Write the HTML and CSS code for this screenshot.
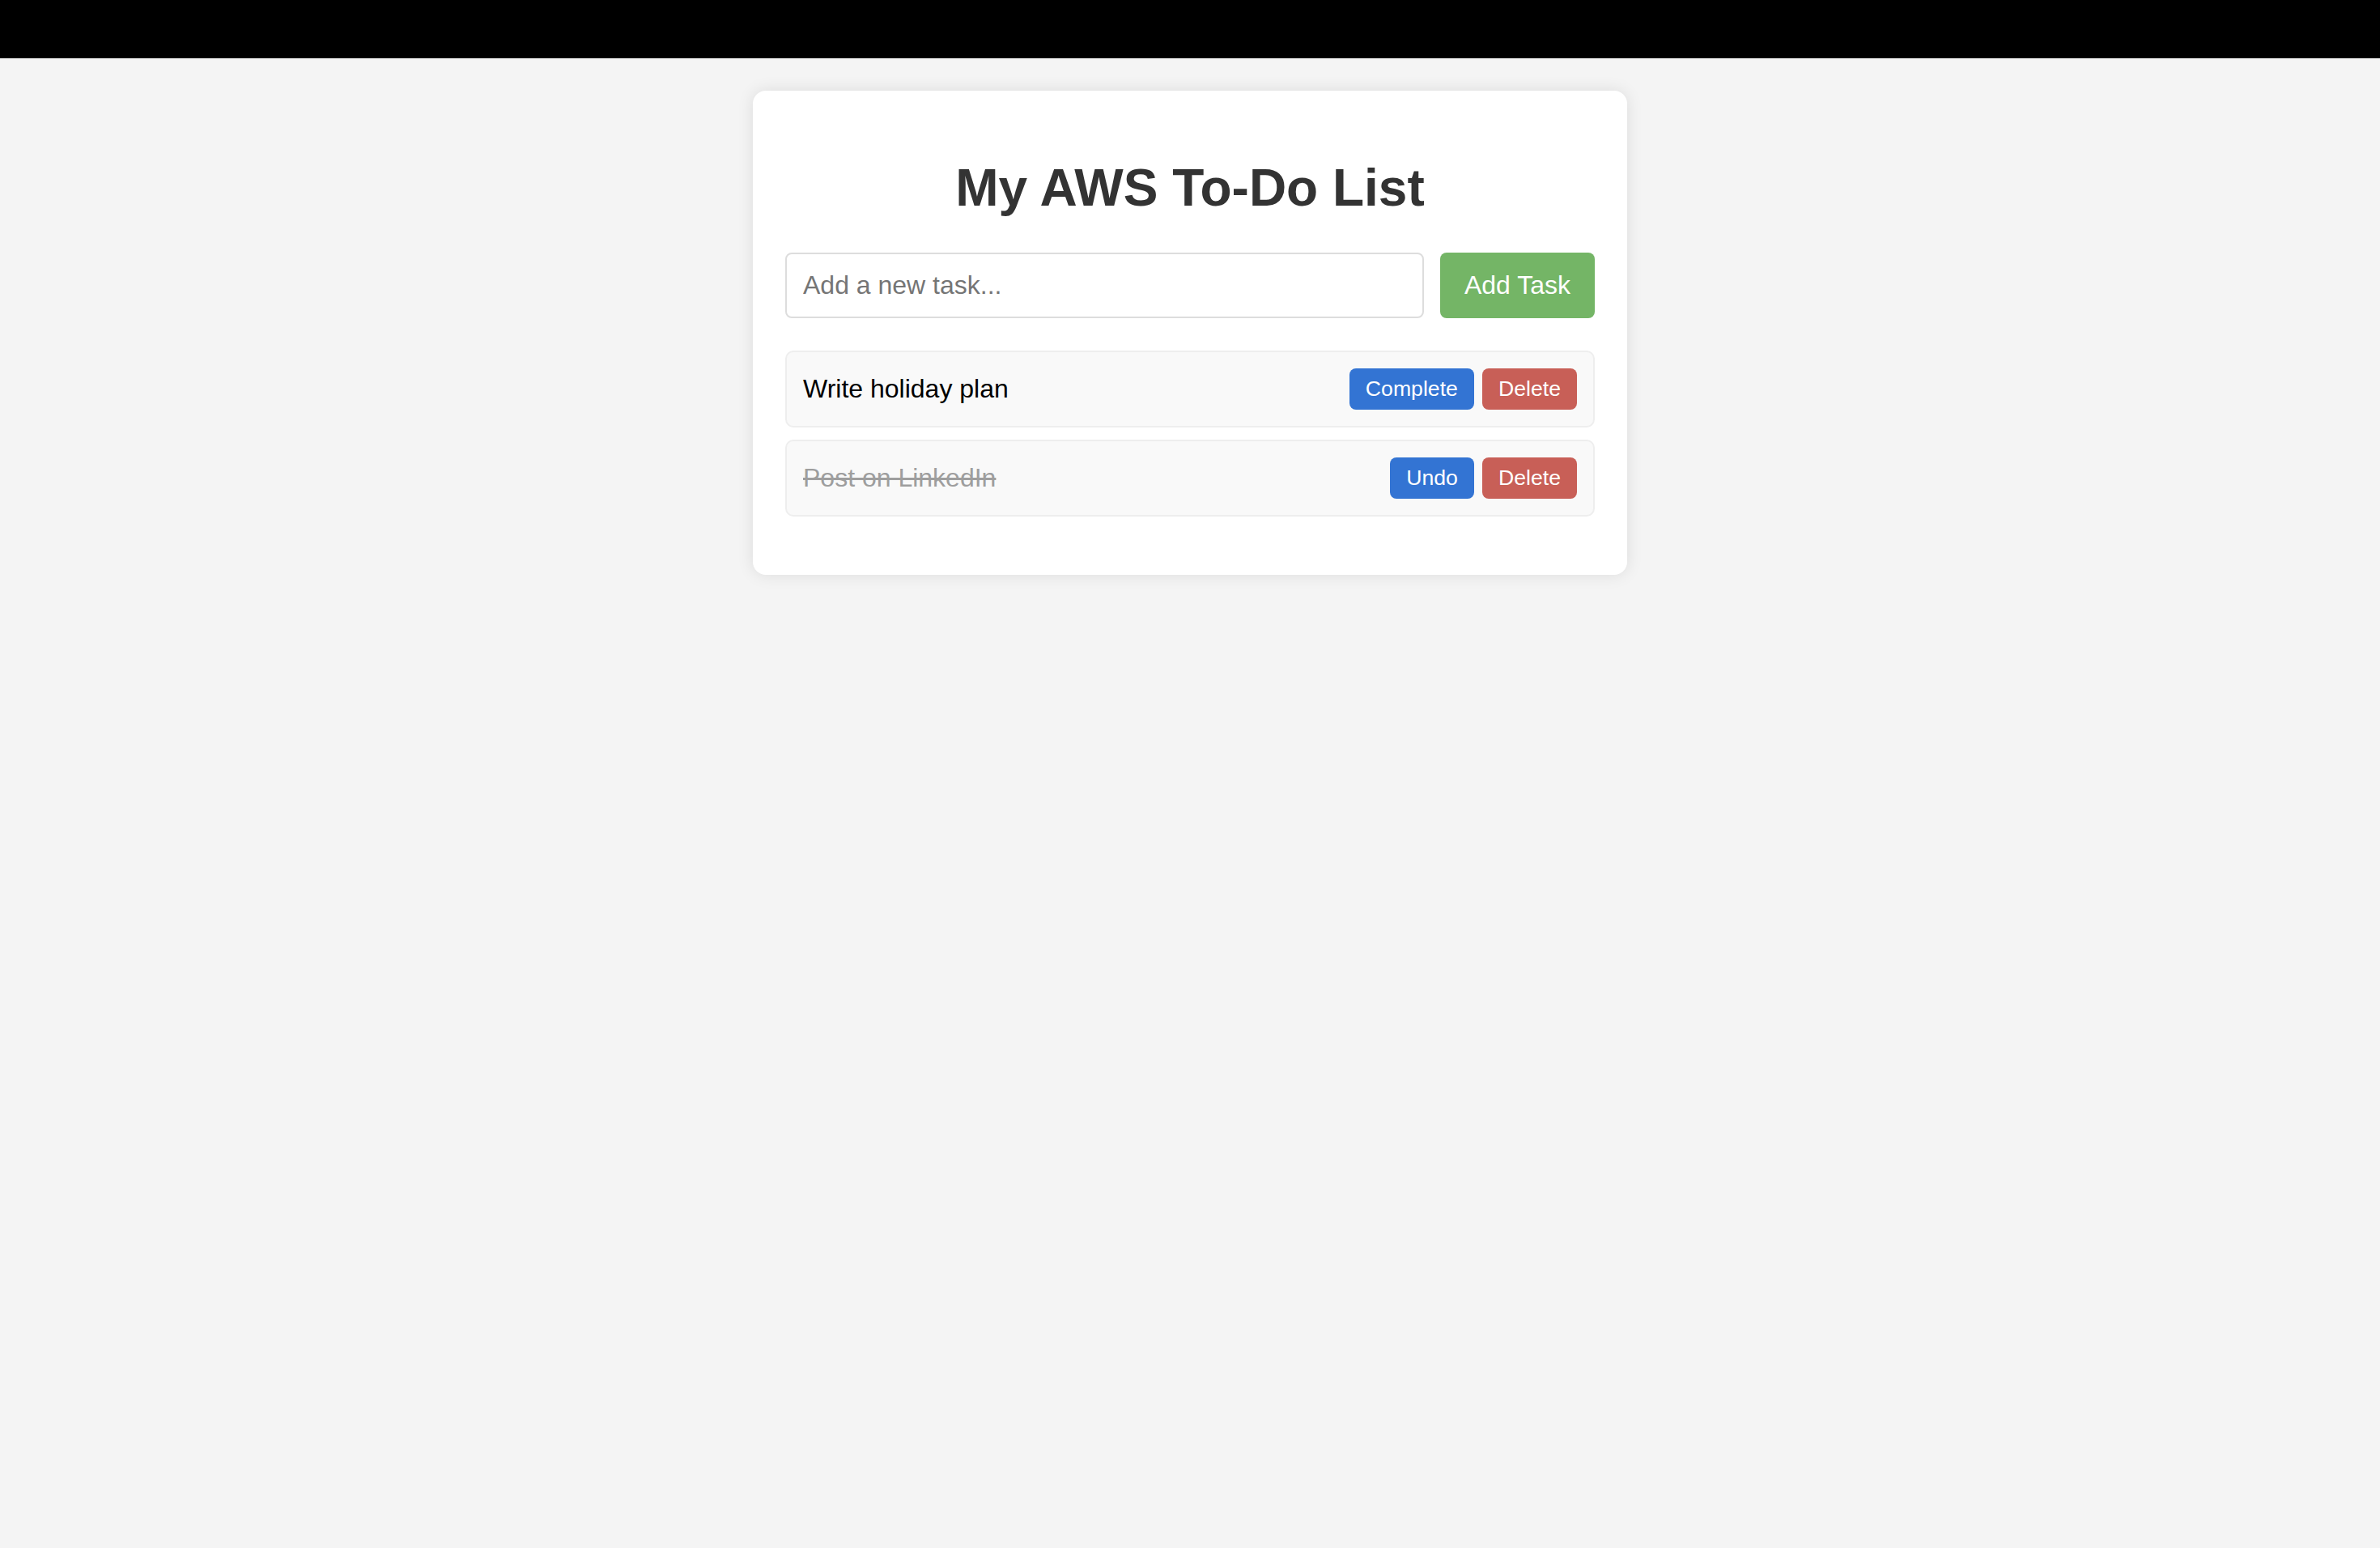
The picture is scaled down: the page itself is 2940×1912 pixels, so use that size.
FILE: index.html
```html
<!DOCTYPE html>
<html lang="en">
<head>
<meta charset="utf-8">
<title>My AWS To-Do List</title>
<link rel="stylesheet" href="styles.css">
</head>
<body>
<div class="topbar"></div>
<main class="card">
  <h1 class="title">My AWS To-Do List</h1>
  <div class="add-row">
    <input class="task-input" type="text" placeholder="Add a new task...">
    <button class="add-btn">Add Task</button>
  </div>
  <ul class="task-list">
    <li class="task">
      <span class="task-text">Write holiday plan</span>
      <div class="actions">
        <button class="btn btn-blue">Complete</button>
        <button class="btn btn-red">Delete</button>
      </div>
    </li>
    <li class="task">
      <span class="task-text done">Post on LinkedIn</span>
      <div class="actions">
        <button class="btn btn-blue">Undo</button>
        <button class="btn btn-red">Delete</button>
      </div>
    </li>
  </ul>
</main>
</body>
</html>
```
FILE: styles.css
```css
html, body {
  margin: 0;
  padding: 0;
}
body {
  background: #f4f4f4;
  font-family: "Liberation Sans", Arial, sans-serif;
  min-height: 1912px;
}
.topbar {
  height: 72px;
  background: #000;
}
.card {
  display: block;
  box-sizing: border-box;
  width: 1080px;
  margin: 40px auto 0;
  padding: 40px;
  background: #fff;
  border-radius: 16px;
  box-shadow: 0 0 20px rgba(0, 0, 0, 0.1);
}
.title {
  margin: 43px 0;
  font-size: 64px;
  font-weight: bold;
  color: #333;
  text-align: center;
  line-height: normal;
}
.add-row {
  display: flex;
  gap: 20px;
  margin-bottom: 40px;
}
.task-input {
  flex: 1;
  min-width: 0;
  box-sizing: border-box;
  padding: 20px;
  border: 2px solid #ddd;
  border-radius: 8px;
  font-family: "Liberation Sans", Arial, sans-serif;
  font-size: 32px;
  color: #000;
  background: #fff;
  outline: none;
}
.task-input::placeholder {
  color: #757575;
}
.add-btn {
  padding: 20px 30px;
  border: none;
  border-radius: 8px;
  background: #74b566;
  color: #fff;
  font-family: "Liberation Sans", Arial, sans-serif;
  font-size: 32px;
}
.task-list {
  list-style: none;
  margin: 32px 0;
  padding: 0;
}
.task {
  display: flex;
  justify-content: space-between;
  align-items: center;
  padding: 20px;
  margin-bottom: 15px;
  background: #f9f9f9;
  border: 2px solid #eee;
  border-radius: 10px;
}
.task-text {
  font-size: 32px;
  color: #000;
}
.task-text.done {
  color: #9e9e9e;
  text-decoration: line-through;
}
.actions {
  display: flex;
  gap: 10px;
}
.btn {
  padding: 10px 20px;
  border: none;
  border-radius: 8px;
  color: #fff;
  font-family: "Liberation Sans", Arial, sans-serif;
  font-size: 26.67px;
  line-height: normal;
}
.btn-blue {
  background: #3374d3;
}
.btn-red {
  background: #c85f57;
}
```
